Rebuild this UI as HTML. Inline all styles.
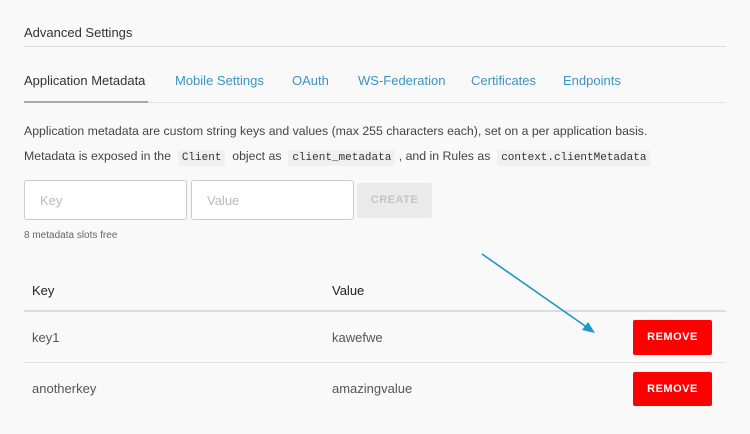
<!DOCTYPE html>
<html><head><meta charset="utf-8"><style>
*{margin:0;padding:0;box-sizing:border-box}
body{width:750px;height:434px;background:#f9f9f9;font-family:"Liberation Sans",sans-serif;color:#333;position:relative;overflow:hidden}
.a{position:absolute;white-space:nowrap}
code{font-family:"Liberation Mono",monospace;font-size:11px;background:#f0f0f0;padding:2px 4px;color:#333}
.tab{position:absolute;top:73px;font-size:13px;color:#3c93c4}
.btn{position:absolute;left:633px;width:79px;background:#ff0000;color:#fff;font-size:11px;font-weight:bold;letter-spacing:.5px;text-align:center;border-radius:2px}
</style></head><body>
<div class="a" style="left:24px;top:25px;font-size:13px;color:#333">Advanced Settings</div>
<div class="a" style="left:24px;top:46px;width:702px;height:1px;background:#ddd"></div>
<div class="tab" style="left:24px;color:#333">Application Metadata</div>
<div class="tab" style="left:175px">Mobile Settings</div>
<div class="tab" style="left:292px">OAuth</div>
<div class="tab" style="left:358px">WS-Federation</div>
<div class="tab" style="left:471px">Certificates</div>
<div class="tab" style="left:563px">Endpoints</div>
<div class="a" style="left:24px;top:102px;width:702px;height:1px;background:#e3e3e3"></div>
<div class="a" style="left:24px;top:101px;width:124px;height:2px;background:#aaa"></div>
<div class="a" style="left:24px;top:124px;font-size:12.3px;color:#444">Application metadata are custom string keys and values (max 255 characters each), set on a per application basis.</div>
<div class="a" style="left:24px;top:149px;font-size:12.3px;color:#444">Metadata is exposed in the &nbsp;<code>Client</code>&nbsp; object as &nbsp;<code>client_metadata</code>&nbsp;, and in Rules as &nbsp;<code>context.clientMetadata</code></div>
<div class="a" style="left:24px;top:180px;width:163px;height:40px;background:#fff;border:1px solid #ccc;border-radius:3px;font-size:13px;color:#bbb;padding:12px 0 0 15px">Key</div>
<div class="a" style="left:191px;top:180px;width:163px;height:40px;background:#fff;border:1px solid #ccc;border-radius:3px;font-size:13px;color:#bbb;padding:12px 0 0 15px">Value</div>
<div class="a" style="left:357px;top:183px;width:75px;height:35px;background:#eaeaea;border-radius:2px;font-size:11px;font-weight:bold;color:#c4c4c4;text-align:center;line-height:35px;letter-spacing:.5px">CREATE</div>
<div class="a" style="left:24px;top:230px;font-size:10px;color:#666">8 metadata slots free</div>
<div class="a" style="left:32px;top:283px;font-size:13px;color:#222">Key</div>
<div class="a" style="left:332px;top:283px;font-size:13px;color:#222">Value</div>
<div class="a" style="left:24px;top:310px;width:702px;height:2px;background:#ddd"></div>
<div class="a" style="left:32px;top:330px;font-size:13px;color:#555">key1</div>
<div class="a" style="left:332px;top:330px;font-size:13px;color:#555">kawefwe</div>
<div class="btn" style="top:320px;height:35px;line-height:35px">REMOVE</div>
<div class="a" style="left:24px;top:362px;width:702px;height:1px;background:#e3e3e3"></div>
<div class="a" style="left:32px;top:381px;font-size:13px;color:#555">anotherkey</div>
<div class="a" style="left:332px;top:381px;font-size:13px;color:#555">amazingvalue</div>
<div class="btn" style="top:372px;height:34px;line-height:34px">REMOVE</div>
<svg class="a" style="left:0;top:0" width="750" height="434"><line x1="482" y1="254" x2="588" y2="328" stroke="#1e98c8" stroke-width="1.6"/><polygon points="595,333 582,330 588,322" fill="#1e98c8"/></svg>
</body></html>
